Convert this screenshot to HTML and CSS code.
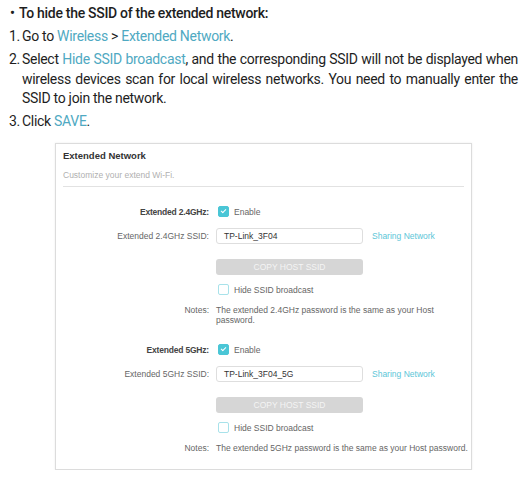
FILE: index.html
```html
<!DOCTYPE html>
<html lang="en">
<head>
    <meta charset="UTF-8">
    <title>Hide the SSID of the extended network</title>
    <link rel="stylesheet" href="styles.css">
</head>
<body>
    <div class="steps">
        <div class="step heading"><span class="num">&bull;</span><span class="txt">To hide the SSID of the extended network:</span></div>
        <div class="step"><span class="num">1.</span><span class="txt">Go to <span class="link">Wireless</span> &gt; <span class="link">Extended Network</span>.</span></div>
        <div class="step"><span class="num">2.</span><span class="txt">Select <span class="link">Hide SSID broadcast</span>, and the corresponding SSID will not be displayed when wireless devices scan for local wireless networks. You need to manually enter the SSID to join the network.</span></div>
        <div class="step"><span class="num">3.</span><span class="txt">Click <span class="link">SAVE</span>.</span></div>
    </div>

    <div class="panel">
        <div class="panel-title">Extended Network</div>
        <div class="panel-sub">Customize your extend Wi-Fi.</div>

        <div class="band">
            <div class="row row-enable">
                <span class="label bold">Extended 2.4GHz:</span>
                <label class="check"><span class="box on"></span>Enable</label>
            </div>
            <div class="row row-input">
                <span class="label">Extended 2.4GHz SSID:</span>
                <span class="field">TP-Link_3F04</span>
                <span class="share">Sharing Network</span>
            </div>
            <div class="row row-btn">
                <span class="label"></span>
                <span class="btn">COPY HOST SSID</span>
            </div>
            <div class="row row-hide">
                <span class="label"></span>
                <label class="check"><span class="box"></span>Hide SSID broadcast</label>
            </div>
            <div class="row row-notes">
                <span class="label">Notes:</span>
                <span class="notes">The extended 2.4GHz password is the same as your Host password.</span>
            </div>
        </div>

        <div class="band">
            <div class="row row-enable">
                <span class="label bold">Extended 5GHz:</span>
                <label class="check"><span class="box on"></span>Enable</label>
            </div>
            <div class="row row-input">
                <span class="label">Extended 5GHz SSID:</span>
                <span class="field">TP-Link_3F04_5G</span>
                <span class="share">Sharing Network</span>
            </div>
            <div class="row row-btn">
                <span class="label"></span>
                <span class="btn">COPY HOST SSID</span>
            </div>
            <div class="row row-hide">
                <span class="label"></span>
                <label class="check"><span class="box"></span>Hide SSID broadcast</label>
            </div>
            <div class="row row-notes">
                <span class="label">Notes:</span>
                <span class="notes">The extended 5GHz password is the same as your Host password.</span>
            </div>
        </div>
    </div>
</body>
</html>
```

FILE: styles.css
```css
body {
    margin: 0;
    background-color: #fff;
    font-family: Roboto, "Liberation Sans", sans-serif;
    color: #1e1e1e;
}

.steps {
    padding: 4px 14px 0 9px;
    font-size: 14px;
    letter-spacing: -0.3px;
    line-height: 19.5px;
}

.step {
    display: flex;
    margin-bottom: 3.5px;
}

.step .num {
    flex: none;
    width: 13px;
}

.step .txt {
    flex: 1;
    text-align: justify;
}

.heading {
    font-weight: 500;
}

.heading .num {
    width: 9px;
    padding-left: 1px;
}

.link {
    color: #4fa9c2;
}

.panel {
    margin: 11px 0 0 55px;
    width: 401px;
    padding: 0 7px 16px 7px;
    border: 1px solid #dcdcdc;
    box-shadow: 0 0 2px rgba(0, 0, 0, 0.08);
    font-family: "Liberation Sans", Arial, sans-serif;
    font-size: 8.5px;
    color: #555;
}

.panel-title {
    padding-top: 5px;
    font-size: 9.5px;
    font-weight: bold;
    color: #333;
    line-height: 13px;
}

.panel-sub {
    margin-top: 8px;
    padding-bottom: 5px;
    color: #b0b0b0;
    border-bottom: 1px solid #e2e2e2;
    line-height: 11px;
}

.band {
    padding-top: 17px;
}

.row {
    display: grid;
    grid-template-columns: 146px 147px auto;
    column-gap: 7px;
    align-items: center;
}

.label {
    text-align: right;
    color: #666;
}

.label.bold {
    font-weight: bold;
    letter-spacing: -0.2px;
    color: #444;
}

.row-enable {
    height: 16px;
}

.row-input {
    height: 16px;
    margin-top: 8px;
}

.row-btn {
    height: 16px;
    margin-top: 15px;
}

.row-hide {
    height: 12px;
    margin-top: 9px;
}

.row-notes {
    margin-top: 9px;
    align-items: start;
    line-height: 10px;
}

.check {
    display: flex;
    align-items: center;
    color: #666;
}

.box {
    width: 9px;
    height: 9px;
    margin: 0 5px 0 2px;
    border: 1px solid #a8e2ea;
    border-radius: 2px;
    background-color: #fff;
    position: relative;
}

.box.on {
    background-color: #4ac6d6;
    border-color: #4ac6d6;
}

.box.on::after {
    content: "";
    position: absolute;
    left: 3px;
    top: 1px;
    width: 2px;
    height: 4px;
    border: solid #fff;
    border-width: 0 1.5px 1.5px 0;
    transform: rotate(45deg);
}

.field {
    box-sizing: border-box;
    height: 16px;
    padding-left: 7px;
    border: 1px solid #dedede;
    border-radius: 3px;
    line-height: 14px;
    color: #333;
}

.share {
    margin-left: 2px;
    color: #5cc6d8;
}

.btn {
    height: 16px;
    border-radius: 3px;
    background-color: #d6d6d6;
    color: #f4f4f4;
    text-align: center;
    line-height: 16px;
}

.notes {
    grid-column: 2 / 4;
    margin-right: -6px;
    color: #666;
}
```
